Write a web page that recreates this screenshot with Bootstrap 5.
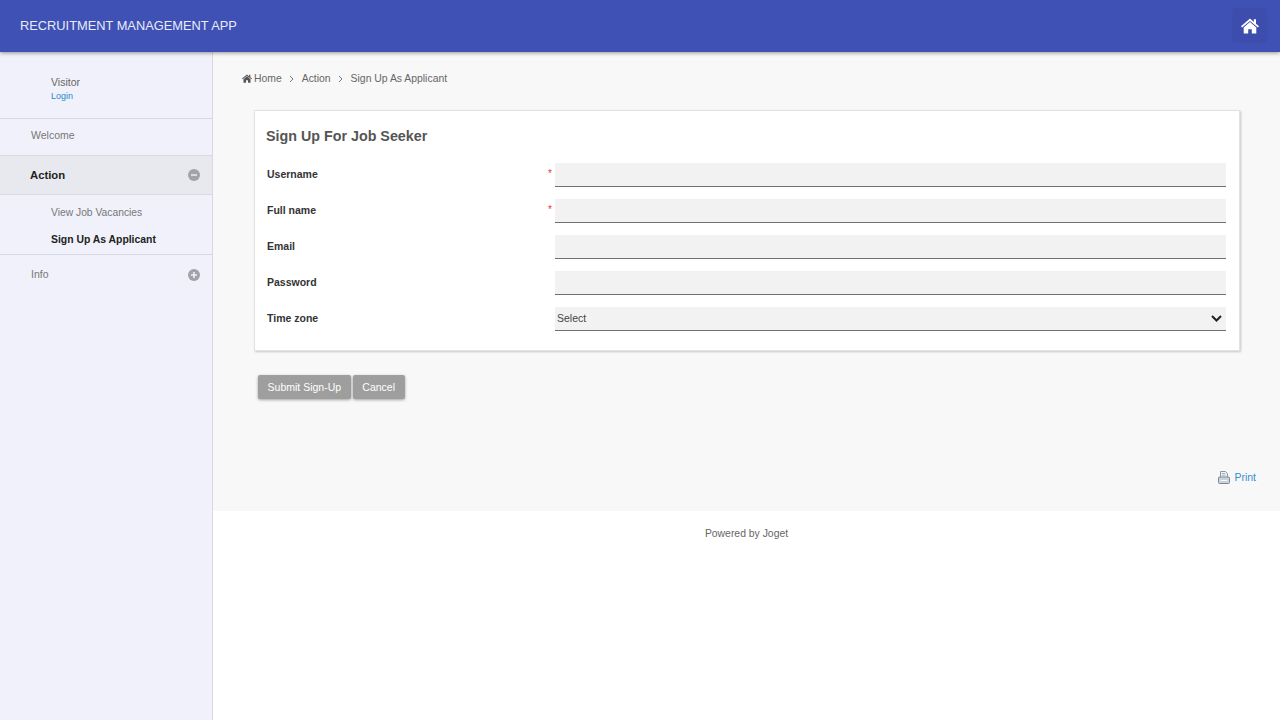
<!DOCTYPE html>
<html lang="en">
<head>
<meta charset="utf-8">
<title>Recruitment Management App</title>
<link href="https://cdn.jsdelivr.net/npm/bootstrap@5.3.0/dist/css/bootstrap.min.css" rel="stylesheet">
<style>
html,body{height:100%}
body{font-family:"Liberation Sans",Arial,sans-serif;font-size:12px;color:#555;background:#fff;height:720px;overflow:hidden}
.top-bar{height:52px;background:#3f51b5;box-shadow:0 1px 4px rgba(0,0,0,.4);padding:0 14px 0 20px;position:relative;z-index:2}
.app-title{font-size:12.83px;color:#e8ebf8}
.home-btn{width:33px;height:33px;background:#3c4dae;border-radius:3px;box-shadow:0 0 2px rgba(0,0,0,.12);margin-top:-1px}
.side-col{width:213px;flex:none;background:#f0f1fa;border-right:1px solid #d8d9e2;height:668px}
.user-box{height:67px;padding:25px 0 0 51px;border-bottom:1px solid #d8d9e2;line-height:1}
.user-name{font-size:10.5px;color:#666;display:block;margin-bottom:4px}
.user-login{font-size:9px;color:#2a87d0;text-decoration:none;display:block}
.menu-row{padding:0 12px 0 31px;font-size:10.5px;color:#777;border-bottom:1px solid #d8d9e2}
.menu-welcome{height:37px;padding-bottom:3px}
.menu-action{height:39px;background:#e8e9ef;color:#222;font-weight:700;font-size:11.3px;padding-left:30px;padding-bottom:0}
.menu-info{height:40px;border-bottom:0}
.sub-menu{height:60px;padding:4px 0 0 51px;border-bottom:1px solid #d8d9e2;font-size:10.3px}
.sub-item{height:27px;color:#777;line-height:27px}
.sub-item.on{color:#222;font-weight:700;font-size:10.4px}
.main-col{flex:1;min-width:0}
.main-area{height:459px;background:#f8f8f8;padding:19px 24px 0 29px;position:relative}
.crumbs{height:15px;font-size:10.4px;color:#666;gap:6.5px;margin-bottom:24px;line-height:15px}
.crumb-home{gap:2px}
.crumb-sep{color:#777;width:7px}
.form-sheet{margin-left:12px;width:986px;height:241px;background:#fff;border:1px solid #e2e2e2;box-shadow:1px 1px 2px rgba(0,0,0,.2);padding:16px 13px 0 11px}
.sheet-title{font-size:14.3px;font-weight:700;color:#555;margin:0 0 18px;line-height:18px;height:18px}
.field-row{height:24px;margin-bottom:12px}
.field-label{width:280px;flex:none;padding-left:1px;font-size:10.5px;font-weight:700;color:#333}
.req-mark{width:9px;flex:none;color:#e33;font-size:10px;line-height:18px;align-self:flex-start;padding:2px 0 0 2px}
.req-gap{width:9px;flex:none}
.field-input{flex:1;height:24px;background:#f2f2f2;border:0;border-bottom:1px solid #707070;border-radius:0;padding:0 2px;font-size:10.5px;color:#444;outline:0;min-width:0}
.sel-text{flex:1}
.sel-chev{margin-right:2px}
.action-row{margin:24px 0 0 16px;gap:2px}
.act-btn{height:24px;background:#9e9e9e;color:#fff;border:0;border-radius:2px;box-shadow:0 1px 3px rgba(0,0,0,.35);font-size:10.5px;padding:0 9.6px;line-height:24px}
.print-link{position:absolute;right:24px;top:418px;color:#3a8dd4;font-size:10.5px;text-decoration:none;gap:4px}
.foot-line{font-size:10.4px;color:#666;text-align:center;padding-top:15px;line-height:16px}
</style>
</head>
<body>
<div class="top-bar d-flex align-items-center justify-content-between">
  <div class="app-title">RECRUITMENT MANAGEMENT APP</div>
  <div class="home-btn d-flex align-items-center justify-content-center">
    <svg width="18" height="16" viewBox="0 0 18 16" aria-hidden="true"><path fill="#fff" d="M9 .6 0 8.2l1.1 1.3L9 2.9l7.9 6.6L18 8.2l-3-2.5V1.2h-2.2v2.7zM9 4.1 2.7 9.4V15.6H7.2v-4.4h3.6v4.4h4.5V9.4z"/></svg>
  </div>
</div>
<div class="d-flex">
  <aside class="side-col">
    <div class="user-box">
      <span class="user-name">Visitor</span>
      <a class="user-login" href="#">Login</a>
    </div>
    <div class="menu-row menu-welcome d-flex align-items-center">Welcome</div>
    <div class="menu-row menu-action d-flex align-items-center justify-content-between">
      <span>Action</span>
      <svg width="12" height="12" viewBox="0 0 12 12" aria-hidden="true"><circle cx="6" cy="6" r="6" fill="#a2a2a8"/><rect x="3" y="5.2" width="6" height="1.6" fill="#e8e9ef"/></svg>
    </div>
    <div class="sub-menu">
      <div class="sub-item">View Job Vacancies</div>
      <div class="sub-item on">Sign Up As Applicant</div>
    </div>
    <div class="menu-row menu-info d-flex align-items-center justify-content-between">
      <span>Info</span>
      <svg width="12" height="12" viewBox="0 0 12 12" aria-hidden="true"><circle cx="6" cy="6" r="6" fill="#a2a2a8"/><path d="M3 5.2h2.2V3h1.6v2.2H9v1.6H6.8V9H5.2V6.8H3z" fill="#f0f1fa"/></svg>
    </div>
  </aside>
  <div class="main-col">
    <main class="main-area">
      <div class="crumbs d-flex align-items-center">
        <span class="crumb-home d-flex align-items-center">
          <svg width="10" height="9" viewBox="0 0 18 16" aria-hidden="true"><path fill="#555" d="M9 .6 0 8.2l1.1 1.3L9 2.9l7.9 6.6L18 8.2l-3-2.5V1.2h-2.2v2.7zM9 4.1 2.7 9.4V15.6H7.2v-4.4h3.6v4.4h4.5V9.4z"/></svg>
          Home</span>
        <svg class="crumb-sep" width="7" height="8" viewBox="0 0 7 8" aria-hidden="true"><path d="M2 1l3 3-3 3" fill="none" stroke="#777" stroke-width="1"/></svg>
        <span>Action</span>
        <svg class="crumb-sep" width="7" height="8" viewBox="0 0 7 8" aria-hidden="true"><path d="M2 1l3 3-3 3" fill="none" stroke="#777" stroke-width="1"/></svg>
        <span>Sign Up As Applicant</span>
      </div>
      <section class="form-sheet">
        <h2 class="sheet-title">Sign Up For Job Seeker</h2>
        <div class="field-row d-flex align-items-center">
          <div class="field-label">Username</div><span class="req-mark">*</span>
          <input class="field-input" type="text" aria-label="Username">
        </div>
        <div class="field-row d-flex align-items-center">
          <div class="field-label">Full name</div><span class="req-mark">*</span>
          <input class="field-input" type="text" aria-label="Full name">
        </div>
        <div class="field-row d-flex align-items-center">
          <div class="field-label">Email</div><span class="req-gap"></span>
          <input class="field-input" type="text" aria-label="Email">
        </div>
        <div class="field-row d-flex align-items-center">
          <div class="field-label">Password</div><span class="req-gap"></span>
          <input class="field-input" type="password" aria-label="Password">
        </div>
        <div class="field-row d-flex align-items-center">
          <div class="field-label">Time zone</div><span class="req-gap"></span>
          <div class="field-input d-flex align-items-center">
            <span class="sel-text">Select</span>
            <svg class="sel-chev" width="11" height="7" viewBox="0 0 11 7" aria-hidden="true"><path d="M1 1l4.5 4.5L10 1" fill="none" stroke="#222" stroke-width="2"/></svg>
          </div>
        </div>
      </section>
      <div class="action-row d-flex">
        <button class="act-btn" type="button">Submit Sign-Up</button>
        <button class="act-btn" type="button">Cancel</button>
      </div>
      <a class="print-link d-flex align-items-center" href="#">
        <svg width="12" height="13" viewBox="0 0 12 13" aria-hidden="true"><path d="M2.5.5h5l2 2v4h-7z" fill="#f1f4f7" stroke="#8a97a5"/><path d="M3.8 2.5h3.4M3.8 4.2h4" stroke="#a9b4bf"/><rect x=".5" y="6" width="11" height="6.5" rx="1" fill="#c9d1d9" stroke="#7d8a98"/><path d="M2.5 9.5h7" stroke="#f4f6f8"/></svg>
        Print
      </a>
    </main>
    <footer class="foot-line">Powered by Joget</footer>
  </div>
</div>
</body>
</html>
